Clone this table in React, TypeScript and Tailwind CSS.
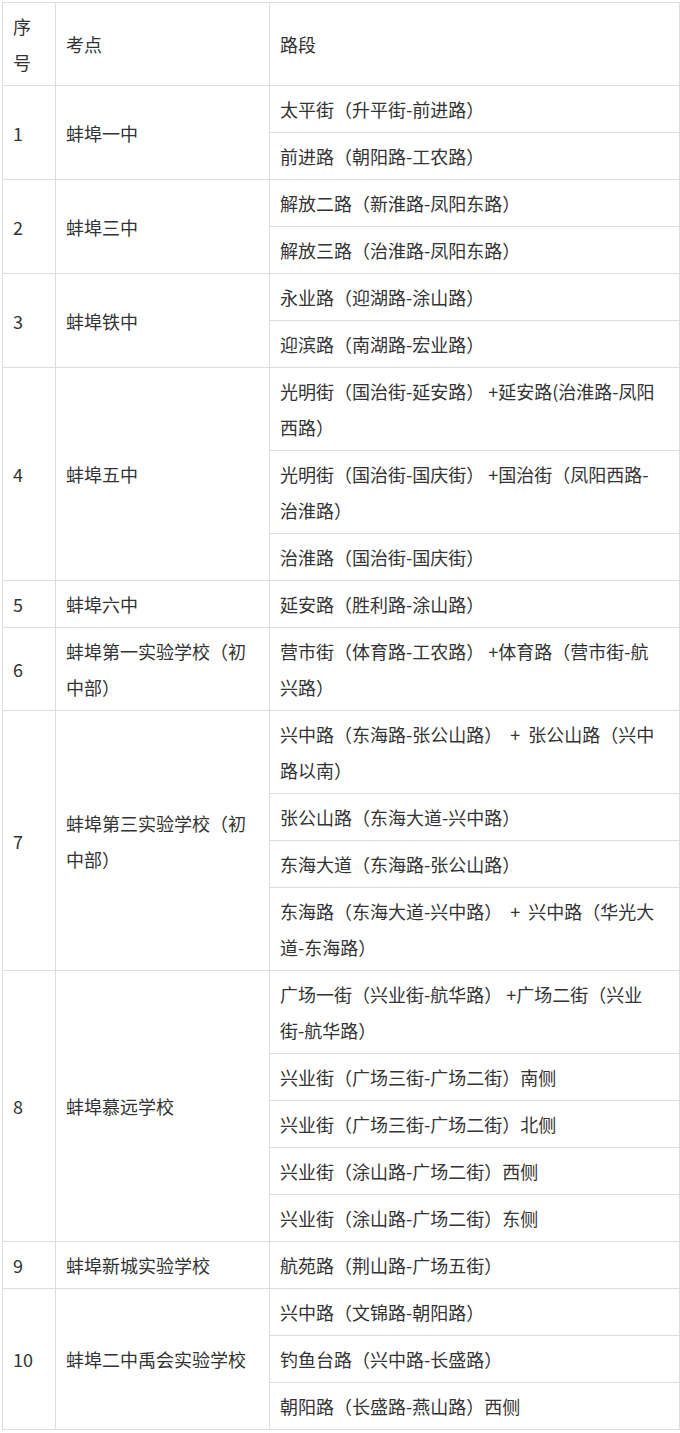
import React from 'react';

type Group = { no: string; school: string[]; roads: string[][] };

const groups: Group[] = [
  { no: '1', school: ['蚌埠一中'], roads: [['太平街（升平街-前进路）'], ['前进路（朝阳路-工农路）']] },
  { no: '2', school: ['蚌埠三中'], roads: [['解放二路（新淮路-凤阳东路）'], ['解放三路（治淮路-凤阳东路）']] },
  { no: '3', school: ['蚌埠铁中'], roads: [['永业路（迎湖路-涂山路）'], ['迎滨路（南湖路-宏业路）']] },
  {
    no: '4',
    school: ['蚌埠五中'],
    roads: [
      ['光明街（国治街-延安路） +延安路(治淮路-凤阳', '西路）'],
      ['光明街（国治街-国庆街） +国治街（凤阳西路-', '治淮路）'],
      ['治淮路（国治街-国庆街）'],
    ],
  },
  { no: '5', school: ['蚌埠六中'], roads: [['延安路（胜利路-涂山路）']] },
  {
    no: '6',
    school: ['蚌埠第一实验学校（初', '中部）'],
    roads: [['营市街（体育路-工农路） +体育路（营市街-航', '兴路）']],
  },
  {
    no: '7',
    school: ['蚌埠第三实验学校（初', '中部）'],
    roads: [
      ['兴中路（东海路-张公山路）  +  张公山路（兴中', '路以南）'],
      ['张公山路（东海大道-兴中路）'],
      ['东海大道（东海路-张公山路）'],
      ['东海路（东海大道-兴中路）  +  兴中路（华光大', '道-东海路）'],
    ],
  },
  {
    no: '8',
    school: ['蚌埠慕远学校'],
    roads: [
      ['广场一街（兴业街-航华路） +广场二街（兴业', '街-航华路）'],
      ['兴业街（广场三街-广场二街）南侧'],
      ['兴业街（广场三街-广场二街）北侧'],
      ['兴业街（涂山路-广场二街）西侧'],
      ['兴业街（涂山路-广场二街）东侧'],
    ],
  },
  { no: '9', school: ['蚌埠新城实验学校'], roads: [['航苑路（荆山路-广场五街）']] },
  {
    no: '10',
    school: ['蚌埠二中禹会实验学校'],
    roads: [['兴中路（文锦路-朝阳路）'], ['钓鱼台路（兴中路-长盛路）'], ['朝阳路（长盛路-燕山路）西侧']],
  },
];

const cell = 'border border-[#dddddd] px-[10px] py-[5px] align-middle text-left font-normal';

function Lines({ lines }: { lines: string[] }) {
  return (
    <>
      {lines.map((l, i) => (
        <div key={i} className="whitespace-pre">
          {l}
        </div>
      ))}
    </>
  );
}

export default function App() {
  return (
    <div className="bg-white p-[2px] min-h-[1433px]">
      <table
        className="table-fixed border-collapse w-[677px] text-[18px] leading-[36px] text-[#333333]"
        style={{ fontFamily: '"Noto Sans CJK SC", "Noto Sans", sans-serif' }}
      >
        <colgroup>
          <col className="w-[53px]" />
          <col className="w-[214px]" />
          <col className="w-[410px]" />
        </colgroup>
        <thead>
          <tr>
            <th className={cell}>
              <Lines lines={['序', '号']} />
            </th>
            <th className={cell}>考点</th>
            <th className={cell}>路段</th>
          </tr>
        </thead>
        <tbody>
          {groups.map(g =>
            g.roads.map((r, i) => (
              <tr key={g.no + '-' + i}>
                {i === 0 && (
                  <>
                    <td className={cell} rowSpan={g.roads.length}>
                      {g.no}
                    </td>
                    <td className={cell} rowSpan={g.roads.length}>
                      <Lines lines={g.school} />
                    </td>
                  </>
                )}
                <td className={cell}>
                  <Lines lines={r} />
                </td>
              </tr>
            ))
          )}
        </tbody>
      </table>
    </div>
  );
}
